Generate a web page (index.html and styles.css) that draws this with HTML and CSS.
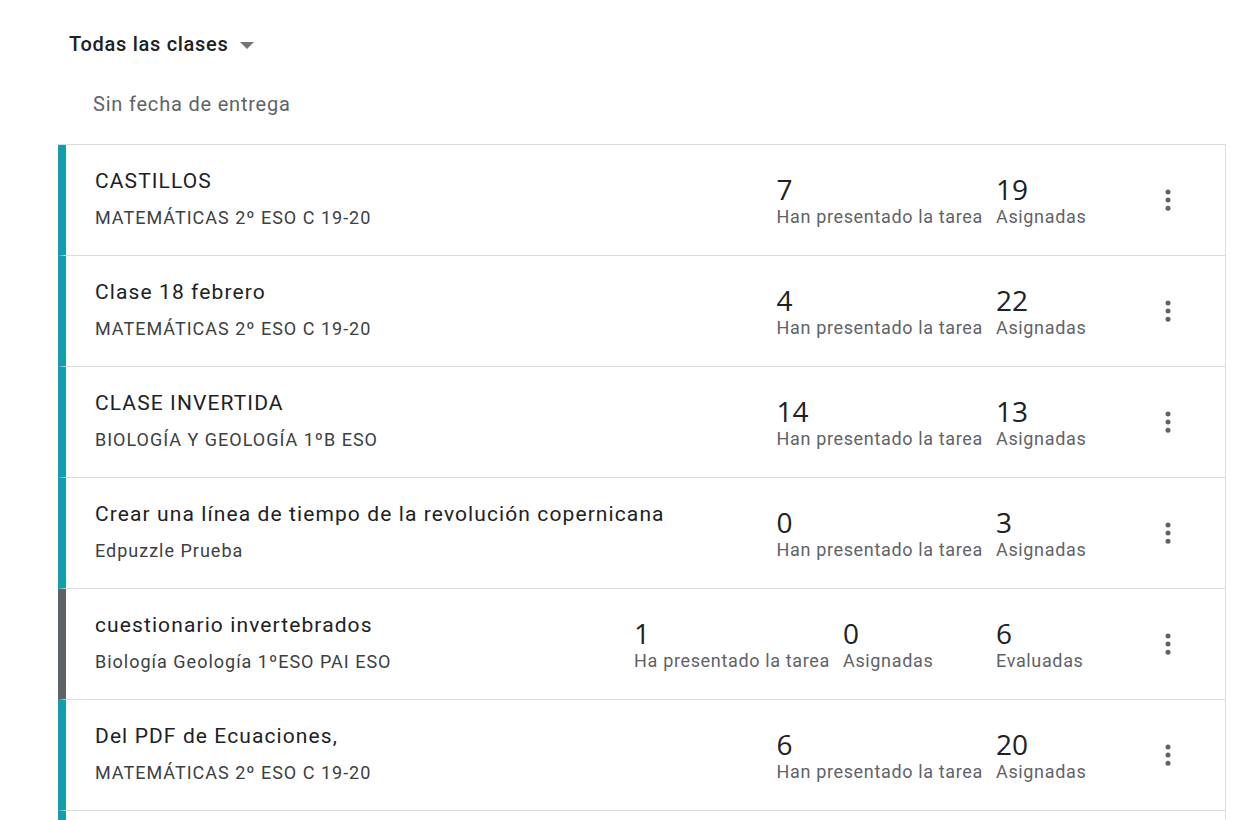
FILE: index.html
```html
<!DOCTYPE html>
<html lang="es">
<head>
  <meta charset="UTF-8">
  <title>Todas las clases</title>
  <link rel="stylesheet" href="styles.css">
</head>
<body>
  <div class="page">
    <!-- Class filter -->
    <div class="filter">
      <span>Todas las clases</span>
      <span class="caret"></span>
    </div>

    <div class="group-label">Sin fecha de entrega</div>

    <div class="list">
      <div class="row">
        <div class="info">
          <div class="title">CASTILLOS</div>
          <div class="course">MATEMÁTICAS 2º ESO C 19-20</div>
        </div>
        <div class="stats">
          <div class="stat"><div class="num">7</div><div class="lbl">Han presentado la tarea</div></div>
          <div class="stat"><div class="num">19</div><div class="lbl">Asignadas</div></div>
        </div>
        <button class="menu"><svg viewBox="0 0 24 24" width="30" height="30"><circle cx="12" cy="5.5" r="2"/><circle cx="12" cy="12" r="2"/><circle cx="12" cy="18.5" r="2"/></svg></button>
      </div>

      <div class="row">
        <div class="info">
          <div class="title">Clase 18 febrero</div>
          <div class="course">MATEMÁTICAS 2º ESO C 19-20</div>
        </div>
        <div class="stats">
          <div class="stat"><div class="num">4</div><div class="lbl">Han presentado la tarea</div></div>
          <div class="stat"><div class="num">22</div><div class="lbl">Asignadas</div></div>
        </div>
        <button class="menu"><svg viewBox="0 0 24 24" width="30" height="30"><circle cx="12" cy="5.5" r="2"/><circle cx="12" cy="12" r="2"/><circle cx="12" cy="18.5" r="2"/></svg></button>
      </div>

      <div class="row">
        <div class="info">
          <div class="title">CLASE INVERTIDA</div>
          <div class="course">BIOLOGÍA Y GEOLOGÍA 1ºB ESO</div>
        </div>
        <div class="stats">
          <div class="stat"><div class="num">14</div><div class="lbl">Han presentado la tarea</div></div>
          <div class="stat"><div class="num">13</div><div class="lbl">Asignadas</div></div>
        </div>
        <button class="menu"><svg viewBox="0 0 24 24" width="30" height="30"><circle cx="12" cy="5.5" r="2"/><circle cx="12" cy="12" r="2"/><circle cx="12" cy="18.5" r="2"/></svg></button>
      </div>

      <div class="row">
        <div class="info">
          <div class="title">Crear una línea de tiempo de la revolución copernicana</div>
          <div class="course">Edpuzzle Prueba</div>
        </div>
        <div class="stats">
          <div class="stat"><div class="num">0</div><div class="lbl">Han presentado la tarea</div></div>
          <div class="stat"><div class="num">3</div><div class="lbl">Asignadas</div></div>
        </div>
        <button class="menu"><svg viewBox="0 0 24 24" width="30" height="30"><circle cx="12" cy="5.5" r="2"/><circle cx="12" cy="12" r="2"/><circle cx="12" cy="18.5" r="2"/></svg></button>
      </div>

      <div class="row closed">
        <div class="info">
          <div class="title">cuestionario invertebrados</div>
          <div class="course">Biología Geología 1ºESO PAI ESO</div>
        </div>
        <div class="stats">
          <div class="stat"><div class="num">1</div><div class="lbl">Ha presentado la tarea</div></div>
          <div class="stat"><div class="num">0</div><div class="lbl">Asignadas</div></div>
          <div class="stat"><div class="num">6</div><div class="lbl">Evaluadas</div></div>
        </div>
        <button class="menu"><svg viewBox="0 0 24 24" width="30" height="30"><circle cx="12" cy="5.5" r="2"/><circle cx="12" cy="12" r="2"/><circle cx="12" cy="18.5" r="2"/></svg></button>
      </div>

      <div class="row">
        <div class="info">
          <div class="title">Del PDF de Ecuaciones,</div>
          <div class="course">MATEMÁTICAS 2º ESO C 19-20</div>
        </div>
        <div class="stats">
          <div class="stat"><div class="num">6</div><div class="lbl">Han presentado la tarea</div></div>
          <div class="stat"><div class="num">20</div><div class="lbl">Asignadas</div></div>
        </div>
        <button class="menu"><svg viewBox="0 0 24 24" width="30" height="30"><circle cx="12" cy="5.5" r="2"/><circle cx="12" cy="12" r="2"/><circle cx="12" cy="18.5" r="2"/></svg></button>
      </div>

      <div class="row">
        <div class="info">
          <div class="title">&nbsp;</div>
          <div class="course">&nbsp;</div>
        </div>
      </div>
    </div>
  </div>
</body>
</html>
```

FILE: styles.css
```css
/* Page basics */
body {
  margin: 0;
  background: #fff;
  font-family: Roboto, Arial, sans-serif;
  color: #202124;
  overflow: hidden;
}

.page {
  padding: 30px 14px 0 58px;
  width: 1168px;
}

.filter {
  display: flex;
  align-items: center;
  gap: 12px;
  padding-left: 11px;
  height: 28px;
  font-size: 20px;
  font-weight: 500;
  letter-spacing: 0.7px;
  color: #202124;
}

.caret {
  width: 0;
  height: 0;
  border-left: 7px solid transparent;
  border-right: 7px solid transparent;
  border-top: 7px solid #757575;
  margin-top: 3px;
}

.group-label {
  padding: 34px 0 0 35px;
  height: 41px;
  font-size: 20px;
  letter-spacing: 0.8px;
  color: #5f6368;
}

/* Assignment rows */
.list {
  margin-top: 11px;
  border-top: 1px solid #dadce0;
}

.row {
  display: flex;
  align-items: center;
  height: 111px;
  border-left: 8px solid #129eaf;
  border-right: 1px solid #dadce0;
  border-bottom: 1px solid #dadce0;
  padding-left: 29px;
  box-sizing: border-box;
}

.row.closed {
  border-left-color: #5f6368;
}

.info {
  flex: 1;
  min-width: 0;
  padding-bottom: 4px;
}

.title {
  font-size: 21px;
  line-height: 28px;
  letter-spacing: 1.1px;
  color: #202124;
  margin-bottom: 11px;
}

.course {
  font-size: 18px;
  line-height: 24px;
  letter-spacing: 1px;
  color: #3c4043;
}

.stats {
  display: flex;
  gap: 13px;
}

.stat {
  min-width: 140px;
}

.num {
  font-family: "Open Sans", Roboto, sans-serif;
  font-size: 28px;
  line-height: 32px;
  color: #202124;
  margin-top: 2px;
}

.lbl {
  font-size: 18px;
  line-height: 24px;
  letter-spacing: 0.65px;
  color: #5f6368;
  white-space: nowrap;
}

.menu {
  width: 48px;
  height: 48px;
  margin: 0 33px 0 8px;
  border: none;
  background: none;
  padding: 0;
  display: flex;
  align-items: center;
  justify-content: center;
  fill: #5f6368;
}
```
